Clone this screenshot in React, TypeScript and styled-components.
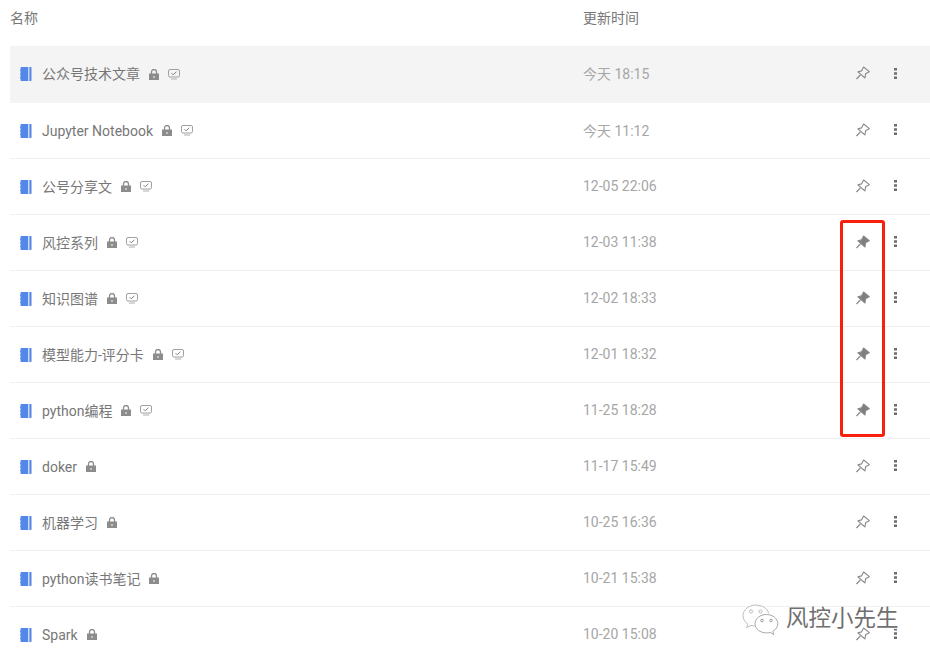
import React from "react";
import styled, { createGlobalStyle } from "styled-components";

const Global = createGlobalStyle`
  html, body { margin: 0; padding: 0; background: #fff; }
  body { font-family: Roboto, "Noto Sans CJK SC", sans-serif; overflow: hidden; }
`;

const Page = styled.div`
  position: relative;
  width: 930px;
  height: 661px;
  overflow: hidden;
  padding-left: 10px;
  box-sizing: border-box;
`;

const Header = styled.div`
  display: grid;
  grid-template-columns: 573px 1fr;
  height: 46px;
  padding-bottom: 12px;
  box-sizing: border-box;
  align-items: center;
  font-size: 14px;
  color: #777;
`;

const Row = styled.div<{ $active?: boolean }>`
  display: grid;
  grid-template-columns: 573px 1fr auto;
  align-items: center;
  height: ${(p) => (p.$active ? 57 : 56)}px;
  box-sizing: border-box;
  border-bottom: 1px solid ${(p) => (p.$active ? "#f4f4f4" : "#f0f0f0")};
  background: ${(p) => (p.$active ? "#f4f4f4" : "#fff")};
`;

const NameCell = styled.div`
  display: flex;
  align-items: center;
  padding-left: 10px;
`;

const Name = styled.span`
  margin-left: 10px;
  font-size: 14px;
  color: #777;
  line-height: 20px;
`;

const DateCell = styled.div`
  font-size: 14px;
  color: #a6a6a6;
  margin-top: -2px;
`;

const Actions = styled.div`
  display: flex;
  align-items: center;
  gap: 24px;
  padding-right: 33px;
  margin-top: -2px;
`;

const Glyph = styled.svg<{ $ml?: number }>`
  display: block;
  flex: none;
  margin-left: ${(p) => p.$ml ?? 0}px;
`;

const RedBox = styled.div`
  position: absolute;
  left: 840px;
  top: 220px;
  width: 45px;
  height: 217px;
  box-sizing: border-box;
  border: 3px solid #f8200c;
  border-radius: 3px;
`;

const Watermark = styled.div`
  position: absolute;
  left: 742px;
  top: 603px;
  display: flex;
  align-items: center;
  gap: 7px;
  font-size: 22.5px;
  color: #707070;
  text-shadow: 0 0 1px #fff, 1px 1px 0 #fff;
`;

const WatermarkText = styled.span`
  line-height: 30px;
  margin-bottom: 4px;
`;

const Book = () => (
  <Glyph width="12" height="14" viewBox="0 0 12 14">
    <path d="M1.5 0H8.300V14H1.500a1 1 0 0 1-1-1V11H0V10H.5V7.500H0V6.500H.5V4H0V3H.5V1a1 1 0 0 1 1-1z" fill="#5387e8" />
    <path d="M9 0H11a1 1 0 0 1 1 1V13a1 1 0 0 1-1 1H9z" fill="#a6c0f0" />
    <path d="M9.700 0H11V14H9.700z" fill="#5387e8" />
  </Glyph>
);

const Lock = () => (
  <Glyph $ml={9} width="10" height="11" viewBox="0 0 10 11">
    <path d="M2.500 5V3a2.500 2.500 0 0 1 5 0V5" fill="none" stroke="#8c8c8c" strokeWidth="1.3" />
    <path d="M0 4.500H10V11H0z" fill="#8c8c8c" />
    <path d="M4.300 7h1.400v2H4.300z" fill="#d8d8d8" />
  </Glyph>
);

const Monitor = () => (
  <Glyph $ml={9} width="12" height="11" viewBox="0 0 12 11">
    <rect x=".5" y=".5" width="11" height="7.500" rx="1.500" fill="none" stroke="#a0a0a0" />
    <path d="M3.600 4.200L5.200 5.800 8.400 2.800" fill="none" stroke="#808080" />
    <path d="M3 10H9" stroke="#bdbdbd" strokeWidth="1.200" />
  </Glyph>
);

const Pin = ({ filled }: { filled?: boolean }) => (
  <Glyph width="14" height="14" viewBox="0 0 14 14">
    <path
      d="M1.900 5.900L5.500 4.900 7.600 1 13.300 5.700 9.600 7.700 9 12z"
      fill={filled ? "#808080" : "none"}
      stroke="#8a8a8a"
      strokeWidth="1.100"
      strokeLinejoin="round"
    />
    <path d="M4.300 9L.5 13" stroke="#8a8a8a" strokeWidth="1.200" />
  </Glyph>
);

const Dots = () => (
  <Glyph width="3" height="11" viewBox="0 0 3 11">
    <path d="M0 0H3V2.600H0zM0 4.200H3V6.800H0zM0 8.400H3V11H0z" fill="#6e6e6e" />
  </Glyph>
);

const WeChat = () => (
  <Glyph width="37" height="33" viewBox="0 0 37 33">
    <path
      d="M14 1C7 1 1 5.600 1 11.600c0 3.400 1.900 6.300 4.800 8.300l-1.200 3.800 4.400-2.300c1.200.3 2.400.5 3.600.6"
      fill="#fff"
      stroke="#bdbdbd"
    />
    <path d="M14 1c6 0 11.500 3.400 12.600 8.400" fill="none" stroke="#bdbdbd" />
    <path
      d="M24.500 10.500C18 10.500 13 14.600 13 19.700s5 9.200 11.500 9.200c1.300 0 2.500-.2 3.600-.5l3.700 2.200-1-3.300c2.900-1.700 5-4.400 5-7.600 0-5.100-5.200-9.200-11.300-9.200z"
      fill="#fff"
      stroke="#a8a8a8"
    />
    <circle cx="9" cy="7.500" r="1.600" fill="none" stroke="#bdbdbd" />
    <circle cx="18.500" cy="7.500" r="1.600" fill="none" stroke="#bdbdbd" />
    <circle cx="20" cy="16.500" r="1.300" fill="none" stroke="#999" />
    <circle cx="29" cy="16.500" r="1.300" fill="none" stroke="#999" />
  </Glyph>
);

const rows = [
  { name: "公众号技术文章", date: "今天 18:15", mon: true, active: true },
  { name: "Jupyter Notebook", date: "今天 11:12", mon: true },
  { name: "公号分享文", date: "12-05 22:06", mon: true },
  { name: "风控系列", date: "12-03 11:38", mon: true, pin: true },
  { name: "知识图谱", date: "12-02 18:33", mon: true, pin: true },
  { name: "模型能力-评分卡", date: "12-01 18:32", mon: true, pin: true },
  { name: "python编程", date: "11-25 18:28", mon: true, pin: true },
  { name: "doker", date: "11-17 15:49" },
  { name: "机器学习", date: "10-25 16:36" },
  { name: "python读书笔记", date: "10-21 15:38" },
  { name: "Spark", date: "10-20 15:08" },
];

export default function App() {
  return (
    <Page>
      <Global />
      <Header>
        <span>名称</span>
        <span>更新时间</span>
      </Header>
      {rows.map((r) => (
        <Row key={r.name} $active={r.active}>
          <NameCell>
            <Book />
            <Name>{r.name}</Name>
            <Lock />
            {r.mon && <Monitor />}
          </NameCell>
          <DateCell>{r.date}</DateCell>
          <Actions>
            <Pin filled={r.pin} />
            <Dots />
          </Actions>
        </Row>
      ))}
      <RedBox />
      <Watermark>
        <WeChat />
        <WatermarkText>风控小先生</WatermarkText>
      </Watermark>
    </Page>
  );
}
